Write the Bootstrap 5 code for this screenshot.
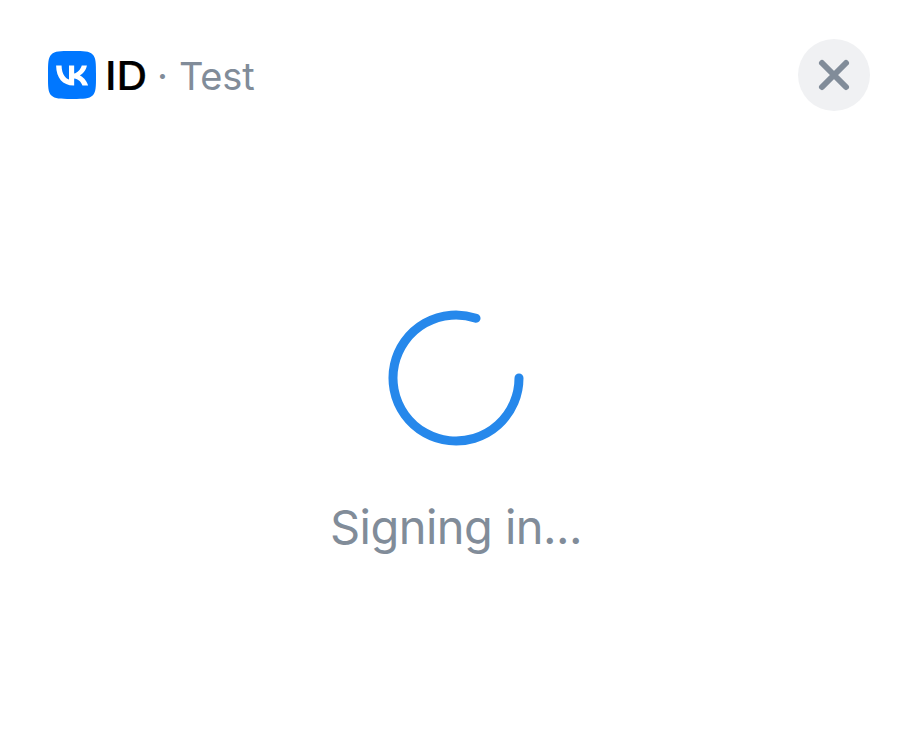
<!DOCTYPE html>
<html lang="en">
<head>
<meta charset="utf-8">
<meta name="viewport" content="width=device-width, initial-scale=1">
<title>VK ID</title>
<link href="https://cdn.jsdelivr.net/npm/bootstrap@5.3.0/dist/css/bootstrap.min.css" rel="stylesheet">
<style>
body { font-family: Inter, "Liberation Sans", sans-serif; color: #818c99; }
.auth-header { height: 150px; padding: 0 42px 0 48px; }
.brand-id, .brand-dot, .brand-app { line-height: 48px; padding-top: 2px; }
.brand-id { width: 39px; font-size: 39px; font-weight: 500; color: #000; -webkit-text-stroke: .2px #000; margin-left: 9px; transform: scaleX(1.09); transform-origin: left; }
.brand-dot { font-size: 38px; width: 11px; margin-left: 13px; }
.brand-app { font-size: 38px; margin-left: 11px; letter-spacing: -.2px; }
.close-btn { width: 72px; height: 72px; background: #f0f1f3; }
.auth-status { padding-top: 156px; }
.status-text { font-size: 47px; line-height: 60px; margin-top: 47px; letter-spacing: -.55px; }
</style>
</head>
<body class="bg-white vh-100 overflow-hidden">
<header class="auth-header d-flex align-items-center justify-content-between">
  <div class="d-flex align-items-center">
    <svg width="48" height="48" viewBox="0 0 24 24" aria-hidden="true">
      <path fill="#07f" d="M0 11.5C0 6.1 0 3.4 1.7 1.7S6.1 0 11.5 0h1c5.4 0 8.1 0 9.8 1.7S24 6.1 24 11.5v1c0 5.4 0 8.1-1.7 9.8S17.900 24 12.500 24h-1c-5.400 0-8.100 0-9.800-1.700S0 17.900 0 12.500z"/>
      <path fill="#fff" d="M12.770 17.290c-5.470 0-8.590-3.750-8.720-9.990h2.740c.09 4.580 2.110 6.520 3.710 6.920V7.300h2.580v3.950c1.580-.17 3.240-1.970 3.800-3.950h2.580c-.43 2.440-2.230 4.240-3.510 4.980 1.280.6 3.330 2.170 4.110 5.010h-2.840c-.61-1.900-2.130-3.370-4.140-3.570v3.570z"/>
    </svg>
    <span class="brand-id">ID</span>
    <span class="brand-dot">·</span>
    <span class="brand-app">Test</span>
  </div>
  <button type="button" class="close-btn btn border-0 rounded-circle p-0 d-flex align-items-center justify-content-center" aria-label="Close">
    <svg width="36" height="36" viewBox="0 0 36 36" fill="none" stroke="#818c99" stroke-width="6" stroke-linecap="round"><path d="M6 6l24 24M30 6L6 30"/></svg>
  </button>
</header>
<main class="auth-status d-flex flex-column align-items-center">
  <svg width="144" height="144" viewBox="-72 -72 144 144" fill="none" stroke="#2688eb" stroke-width="9" stroke-linecap="round" aria-hidden="true"><path d="M63 0A63 63 0 1 1 20 -59.740"/></svg>
  <div class="status-text" role="status">Signing in...</div>
</main>
<script src="https://cdn.jsdelivr.net/npm/bootstrap@5.3.0/dist/js/bootstrap.bundle.min.js"></script>
</body>
</html>
